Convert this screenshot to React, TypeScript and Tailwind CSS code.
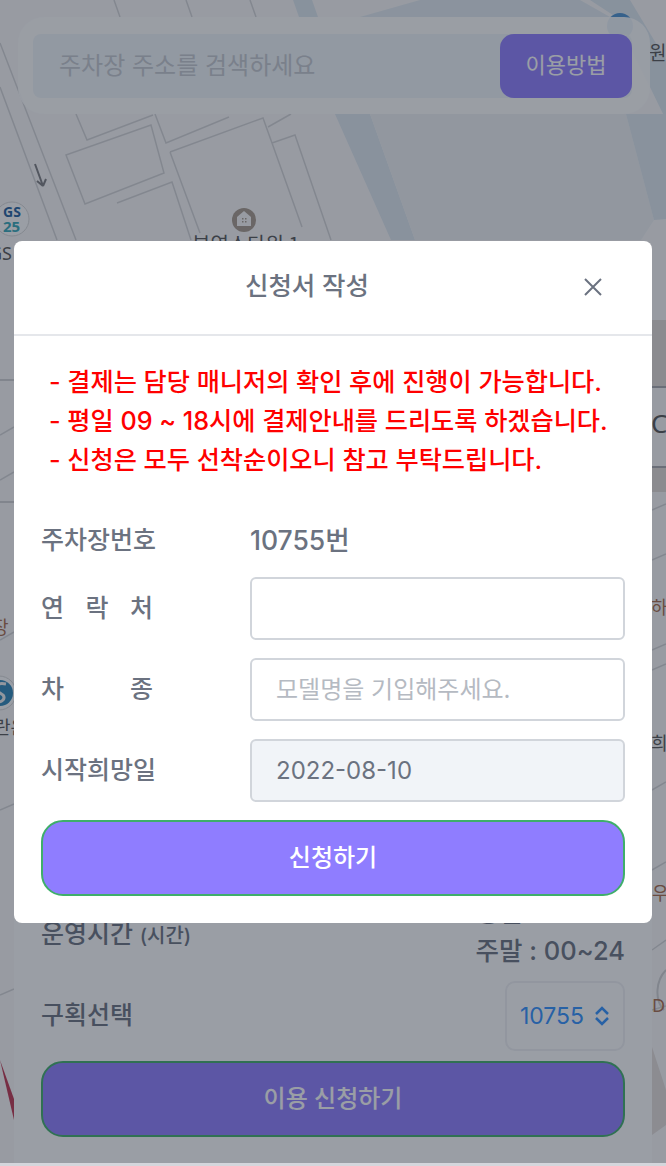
const KR = 'font-["Inter","Noto_Sans_CJK_KR",sans-serif]';

function MapLayer() {
  return (
    <svg className="absolute inset-0" width="666" height="1166" viewBox="0 0 666 1166" fill="none">
      <rect width="666" height="1166" fill="#fbfafa" />
      {/* water and the block on the right */}
      <path d="M293 0h19l6 17h-19z" fill="#dfe9f1" />
      <path d="M360 17l60-17h160l30 17z" fill="#e4ecf2" />
      <path d="M590 0h40l36 60v60l-50-103z" fill="#dfe9f1" />
      <path d="M335 114h35l45 126h-24z" fill="#e0e9f1" />
      <path d="M370 114h256l28 106-13 20H415z" fill="#f0f3f5" />
      <path d="M626 114h40v105l-12 1z" fill="#e0e9f1" />
      <path d="M652 320h14v66h-14zM652 468h14v24h-14z" fill="#e3dcd8" />
      <path d="M652 1047l14 43v35l-14 10z" fill="#e5dedb" />
      <g stroke="#d6d6d8" strokeWidth="1.5">
        <path d="M0 43l76 197M0 87l57 153" />
        <path d="M114 0l6 17M186 0l6 17M250 0l6 17" />
        <path d="M66 155l85-30 13 48-79 31z" />
        <path d="M170 152l93-34 9 25 23-8 36 105M272 143l30 84M170 152l30 81" />
        <path d="M117 203l55-21 19 58" />
        <path d="M76 114l11 26 66-25M155 114l11 29 63-26M268 127l23-13" />
        <path d="M0 435l14-8M0 480l14-8M0 640l14-8M0 810l14-6M0 995l14-6" />
        <path d="M652 510l14-6M652 560l14-6M652 650l14-6M652 670l14-6M652 790l14-8M652 870l14-8M652 950l14-10M652 1010l14-4" />
      </g>
      <path d="M652 387h14M652 467h14" stroke="#a8a8ae" strokeWidth="2" />
      <path d="M0 380h14M0 502h14" stroke="#d2d2d4" strokeWidth="2" />
      <path d="M43 186l-8-22M43 186l-6-5M43 186l3-7" stroke="#7d7d80" strokeWidth="2" />
      <path d="M0 1060l14 39v21z" fill="#c0344f" />
      <circle cx="244" cy="220" r="12" fill="#a89a8c" />
      <path d="M244 211l7 6v9h-14v-9z" fill="#fbfafa" />
      <path d="M242 218h1.5v1.5H242zM245 218h1.5v1.5H245zM242 221h1.5v1.5H242zM245 221h1.5v1.5H245z" fill="#a89a8c" />
      <circle cx="12" cy="219" r="17" fill="#fff" stroke="#d8d8d8" />
      <circle cx="-1" cy="693" r="17" fill="#fff" stroke="#d8d8d8" />
      <circle cx="0" cy="693" r="13" fill="#2a86b8" />
      <path d="M6 684c-9-2-13 3-9 7l6 4c3 4-2 9-9 6" stroke="#f3f3f3" strokeWidth="3" />
      <path d="M666 970c-10 10-12 30-2 40" stroke="#d2d2d4" strokeWidth="2" />
      <circle cx="620" cy="26" r="13" fill="#4a90d0" />
      <text x="3" y="217" fontSize="14" fontWeight="700" fill="#1f5f9e" fontFamily="Noto Sans">GS</text>
      <text x="3" y="232" fontSize="15" fontWeight="700" fill="#33a8b8" fontFamily="Noto Sans">25</text>
      <text x="-11" y="260" fontSize="18" fill="#555" fontFamily="Noto Sans">GS</text>
      <text x="192" y="252" fontSize="20" fill="#555" fontFamily="Noto Sans CJK KR">부영스타워 1</text>
      <text x="649" y="60" fontSize="19" fill="#555" fontFamily="Noto Sans CJK KR">원</text>
      <text x="651" y="433" fontSize="26" fill="#555" fontFamily="Noto Sans">C</text>
      <text x="651" y="614" fontSize="18" fill="#a86a4a" fontFamily="Noto Sans CJK KR">하</text>
      <text x="651" y="750" fontSize="18" fill="#555" fontFamily="Noto Sans CJK KR">희</text>
      <text x="-8" y="634" fontSize="18" fill="#a86a4a" fontFamily="Noto Sans CJK KR">장</text>
      <text x="-6" y="734" fontSize="18" fill="#555" fontFamily="Noto Sans CJK KR">란은</text>
      <text x="652" y="900" fontSize="18" fill="#a86a4a" fontFamily="Noto Sans CJK KR">우</text>
      <text x="652" y="1012" fontSize="18" fill="#a86a4a" fontFamily="Noto Sans">D</text>
    </svg>
  );
}

function SearchBar() {
  return (
    <div className="absolute left-[18px] top-[17px] flex h-[97px] w-[632px] items-center rounded-[26px] bg-white/90 pl-[15px] pr-[18px]">
      <div className="flex h-[64px] flex-1 items-center rounded-[8px] bg-[#f1f6f9] pl-[26px]">
        <span className="text-[24px] text-[#c5c9d0]">주차장 주소를 검색하세요</span>
        <button type="button" className="ml-auto flex h-full w-[132px] items-center justify-center rounded-[14px] bg-[#8f7dff] text-[22px] text-white">
          이용방법
        </button>
      </div>
    </div>
  );
}

function BottomPanel() {
  return (
    <div className="absolute bottom-[3px] left-[14px] flex h-[258px] w-[638px] flex-col bg-white px-[27px] text-[#6b7280]">
      <div className="flex h-[76px] justify-between pt-[2px]">
        <p className="mt-[9px] text-[25px] font-medium">
          운영시간 <span className="text-[20px]">(시간)</span>
        </p>
        <p className="-mt-[13px] text-right text-[25.5px] font-medium leading-[38px]">
          평일 : 00~24
          <br />
          주말 : 00~24
        </p>
      </div>
      <div className="flex h-[70px] items-center justify-between">
        <span className="text-[25px] font-medium">구획선택</span>
        <div className="flex h-full w-[120px] items-center justify-center gap-[10px] rounded-[10px] border-2 border-[#f0f1f4] text-[23px] text-[#2f90ff]">
          10755
          <svg width="16" height="22" viewBox="0 0 16 22" fill="none" stroke="currentColor" strokeWidth="2.5">
            <path d="M2 9l6-6 6 6M2 13l6 6 6-6" />
          </svg>
        </div>
      </div>
      <button type="button" className="mt-[10px] h-[76px] rounded-[22px] border-2 border-[#3fae6a] bg-[#8f7dff] text-[24px] font-medium text-white">
        이용 신청하기
      </button>
    </div>
  );
}

function Field({ label, children }: { label: React.ReactNode; children: React.ReactNode }) {
  return (
    <div className="flex h-[63px] items-center">
      <div className="w-[209px] text-[25px] font-medium text-[#6b7280]">{label}</div>
      {children}
    </div>
  );
}

function SpacedLabel({ chars }: { chars: string[] }) {
  return (
    <div className="flex w-[112px] justify-between">
      {chars.map((c) => (
        <span key={c}>{c}</span>
      ))}
    </div>
  );
}

function ApplyModal() {
  return (
    <div className="absolute left-[14px] top-[241px] w-[638px] rounded-[8px] bg-white">
      <div className="relative flex h-[95px] items-center justify-center border-b-2 border-[#e5e7eb] pb-[2px] pr-[52px]">
        <h2 className="text-[25.5px] font-medium text-[#6b7280]">신청서 작성</h2>
        <svg className="absolute right-[50px] top-[37px]" width="18" height="18" viewBox="0 0 18 18" fill="none" stroke="#6b7280" strokeWidth="2">
          <path d="M1 1l16 16M17 1L1 17" />
        </svg>
      </div>
      <div className="whitespace-nowrap px-[35px] pt-[27px] text-[25.2px] font-medium leading-[39px] text-[#ff0000]">
        <p>- 결제는 담당 매니저의 확인 후에 진행이 가능합니다.</p>
        <p>- 평일 09 ~ 18시에 결제안내를 드리도록 하겠습니다.</p>
        <p>- 신청은 모두 선착순이오니 참고 부탁드립니다.</p>
      </div>
      <div className="px-[27px] pt-[43px]">
        <div className="flex h-[36px] items-center text-[25px] font-medium text-[#6b7280]">
          <span className="w-[209px]">주차장번호</span>
          <span className="text-[26.5px]">10755번</span>
        </div>
        <div className="mt-[18px] flex flex-col gap-[18px]">
          <Field label={<SpacedLabel chars={['연', '락', '처']} />}>
            <input className="h-full w-[375px] rounded-[6px] border-2 border-[#d1d5db] bg-white px-[24px] text-[24px]" />
          </Field>
          <Field label={<SpacedLabel chars={['차', '종']} />}>
            <input
              className="h-full w-[375px] rounded-[6px] border-2 border-[#d1d5db] bg-white px-[24px] text-[24px] placeholder:text-[#b5bac2]"
              placeholder="모델명을 기입해주세요."
            />
          </Field>
          <Field label="시작희망일">
            <input
              className="h-full w-[375px] rounded-[6px] border-2 border-[#d1d5db] bg-[#f1f4f8] px-[24px] text-[24px] text-[#6b7280]"
              defaultValue="2022-08-10"
              readOnly
            />
          </Field>
        </div>
        <button type="button" className="mt-[18px] h-[76px] w-full rounded-[22px] border-2 border-[#3fae6a] bg-[#8f7dff] text-[24px] font-medium text-white">
          신청하기
        </button>
      </div>
      <div className="h-[27px]" />
    </div>
  );
}

export default function App() {
  return (
    <div className={`relative h-[1166px] w-[666px] overflow-hidden ${KR}`}>
      <MapLayer />
      <SearchBar />
      <BottomPanel />
      <div className="absolute inset-0 bg-[#1f2937]/45" />
      <div className="absolute inset-x-0 bottom-0 h-[3px] bg-[#d4d6dc]" />
      <ApplyModal />
    </div>
  );
}
